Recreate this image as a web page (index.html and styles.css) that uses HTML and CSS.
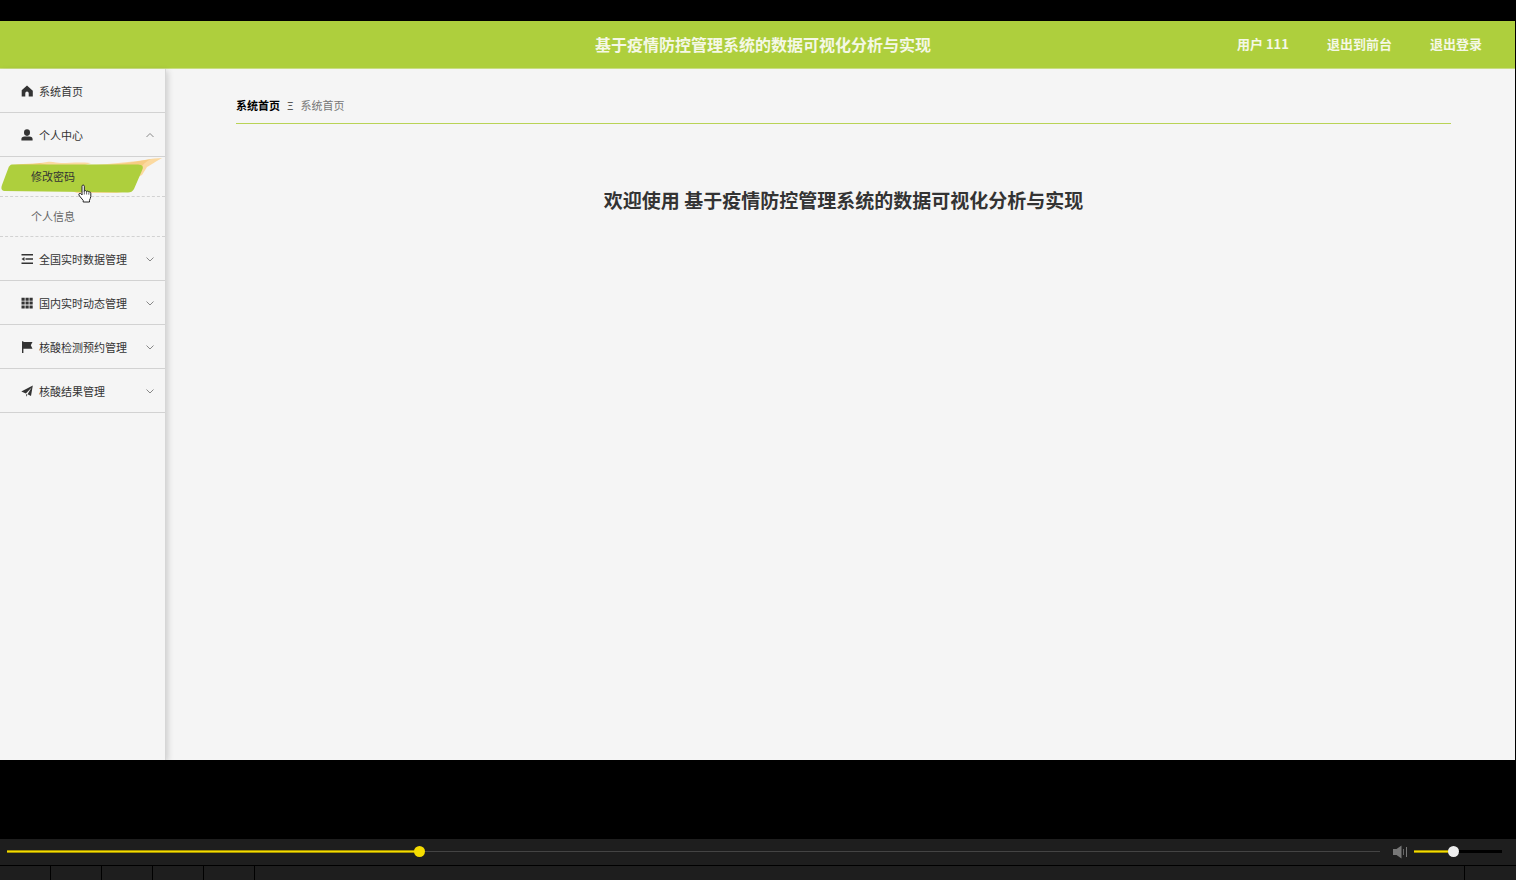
FILE: index.html
```html
<!DOCTYPE html>
<html lang="zh-CN">
<head>
    <meta charset="UTF-8">
    <meta name="viewport" content="width=device-width, initial-scale=1.0">
    <title>基于疫情防控管理系统的数据可视化分析与实现</title>
    <link rel="stylesheet" href="styles.css">
</head>
<body>
    <div class="app">
        <header class="header">
            <h1 class="header-title">基于疫情防控管理系统的数据可视化分析与实现</h1>
            <nav class="header-nav">
                <span>用户 111</span>
                <a href="#front">退出到前台</a>
                <a href="#logout">退出登录</a>
            </nav>
        </header>
        <div class="layout">
            <aside class="sidebar">
                <ul class="menu">
                    <li>
                        <a class="menu-item" href="#home">
                            <svg class="icon" viewBox="0 0 12 12"><path d="M6 .5 11.8 5.7V11.5H7.7V8.2a1.7 1.7 0 0 0-3.4 0v3.3H.7V5.2z"/></svg>
                            <span>系统首页</span>
                        </a>
                    </li>
                    <li>
                        <button class="menu-item" type="button" aria-expanded="true">
                            <svg class="icon" viewBox="0 0 12 12"><ellipse cx="6" cy="3.6" rx="3" ry="3.3"/><path d="M.4 11.6V10Q.4 7.400 3.600 7.400H8.400Q11.600 7.400 11.600 10V11.600Z"/></svg>
                            <span>个人中心</span>
                            <svg class="arrow" viewBox="0 0 8 8"><path d="M.5 6 4 2.500 7.500 6"/></svg>
                        </button>
                        <ul class="submenu">
                            <li>
                                <a class="submenu-item active" href="#password">
                                    <svg class="brush" viewBox="0 0 165 40" preserveAspectRatio="none">
                                        <path d="M8 10C22 5 34 8 47 5c5-1 10 1 14 1 10 0 17-1 30 0l-6 2c16 0 30-2 43-3 14-1 24-4 34-4-7 4-11 7-15 9l-5 8-6 3-7 13-12 2-40 0z" fill="#fbd9a0"/>
                                        <path d="M12 8c10-2 18 0 28-2l8 2h60c14-1 28-3 43-6-8 4-9 8-15 14H12z" fill="#f5c36f" opacity=".6"/>
                                        <path d="M12 7.500H138q7 0 4 6L134 32q-2 3.500-6 3.500L4 34q-4-1-2-6L8 12q1.500-4.500 4-4.500z" fill="#aecf3d"/>
                                    </svg>
                                    <span>修改密码</span>
                                    <svg class="pointer" viewBox="0 0 14 19"><path d="M4 11V2.200C4 .6 6.300.6 6.300 2.200V7.300c.4-1.100 2.200-.8 2.300.4.500-.9 2-.7 2.200.5.800-.7 2-.1 2 1v3.300c0 1.500-1 2.500-1.300 3.800V18H5.200v-1.600L1.500 12C.4 10.700.8 9.300 2 9.300c.8 0 1.400.9 2 1.700z" fill="#fff" stroke="#222" stroke-linejoin="round"/><path d="M6.300 7v3.500M8.600 8v2.500M10.800 8.700v2" fill="none" stroke="#222" stroke-width=".7"/></svg>
                                </a>
                            </li>
                            <li><a class="submenu-item" href="#profile"><span>个人信息</span></a></li>
                        </ul>
                    </li>
                    <li>
                        <button class="menu-item" type="button" aria-expanded="false">
                            <svg class="icon" viewBox="0 0 12 12"><path d="M.5 1h11.500v1.600H.5zM4.500 5.200H12v1.600H4.500zM.5 9.400h11.500V11H.5zM.5 6l3-2v4z"/></svg>
                            <span>全国实时数据管理</span>
                            <svg class="arrow" viewBox="0 0 8 8"><path d="M.5 2.500 4 6 7.500 2.500"/></svg>
                        </button>
                    </li>
                    <li>
                        <button class="menu-item" type="button" aria-expanded="false">
                            <svg class="icon" viewBox="0 0 12 12"><path d="M.5.800h3.200v3H.5zM4.500.800h3.200v3H4.500zM8.500.800h3.200v3H8.500zM.5 4.600h3.200v3H.5zM4.500 4.600h3.200v3H4.500zM8.500 4.600h3.200v3H8.500zM.5 8.400h3.200v3H.5zM4.500 8.400h3.200v3H4.500zM8.500 8.400h3.200v3H8.500z"/></svg>
                            <span>国内实时动态管理</span>
                            <svg class="arrow" viewBox="0 0 8 8"><path d="M.5 2.500 4 6 7.500 2.500"/></svg>
                        </button>
                    </li>
                    <li>
                        <button class="menu-item" type="button" aria-expanded="false">
                            <svg class="icon" viewBox="0 0 12 12"><path d="M1 .2h1.400v11.800H1zM2.400.9H11.500L9.800 4.300l1.700 3.500H2.400z"/></svg>
                            <span>核酸检测预约管理</span>
                            <svg class="arrow" viewBox="0 0 8 8"><path d="M.5 2.500 4 6 7.500 2.500"/></svg>
                        </button>
                    </li>
                    <li>
                        <button class="menu-item" type="button" aria-expanded="false">
                            <svg class="icon" viewBox="0 0 12 12"><path d="M11.800.600 10 11 6.600 9.300 10.600 2.600 4.900 8.500.3 6.500zM5.100 9.100l1.300.7-1.100 1.900z"/></svg>
                            <span>核酸结果管理</span>
                            <svg class="arrow" viewBox="0 0 8 8"><path d="M.5 2.500 4 6 7.500 2.500"/></svg>
                        </button>
                    </li>
                </ul>
            </aside>
            <main class="main">
                <nav class="breadcrumb">
                    <a href="#home">系统首页</a>
                    <span class="separator">Ξ</span>
                    <span>系统首页</span>
                </nav>
                <h2 class="welcome">欢迎使用 基于疫情防控管理系统的数据可视化分析与实现</h2>
            </main>
        </div>
    </div>
    <footer class="player">
        <div class="player-track">
            <input class="range seek" type="range" min="0" max="1000" value="299" aria-label="播放进度">
            <button class="mute" type="button" aria-label="静音">
                <svg viewBox="0 0 16 14"><path d="M1 4h3.500L9.500 .500v13L4.500 10H1z" fill="#777"/><path d="M11.500 4v6" stroke="#666"/><path d="M14.500 2v10" stroke="#777"/></svg>
            </button>
            <input class="range volume" type="range" min="0" max="100" value="44" aria-label="音量">
        </div>
        <div class="player-buttons">
            <span></span>
            <span></span>
            <span></span>
            <span></span>
            <span></span>
            <span class="wide"></span>
            <span></span>
        </div>
    </footer>
</body>
</html>
```
FILE: styles.css
```css
* {
    box-sizing: border-box;
}

body {
    display: flex;
    flex-direction: column;
    min-height: 100vh;
    margin: 0;
    padding-top: 21px;
    background-color: #000;
    color: #333;
    font-family: "Noto Sans CJK SC", sans-serif;
    font-size: 11px;
    line-height: 16px;
}

ul {
    margin: 0;
    padding: 0;
    list-style: none;
}

a {
    color: inherit;
    text-decoration: none;
}

button {
    font: inherit;
    color: inherit;
    background: none;
    border: 0;
    cursor: pointer;
}

.app {
    flex: 1;
    display: flex;
    flex-direction: column;
    margin: 0 1px 79px 0;
    background-color: #f5f5f5;
}

.header {
    display: grid;
    grid-template-columns: 1fr auto 1fr;
    align-items: center;
    height: 48px;
    padding: 0 33px 2px 44px;
    background-color: #aecf3d;
    border-bottom: 1px solid #c9dd83;
    color: #f5f8e6;
}

.header-title {
    grid-column: 2;
    margin: 0;
    font-size: 16px;
    line-height: 24px;
}

.header-nav {
    display: flex;
    justify-content: flex-end;
    gap: 38px;
    font-size: 13px;
    font-weight: bold;
}

.layout {
    flex: 1;
    display: flex;
}

.sidebar {
    width: 166px;
    border-right: 1px solid #d6d6d6;
    box-shadow: 2px 2px 6px rgba(0, 0, 0, 0.16);
}

.menu-item {
    display: flex;
    align-items: center;
    gap: 6px;
    width: 100%;
    height: 44px;
    padding: 0 11px 0 21px;
    border-bottom: 1px solid #d2d2d2;
    text-align: left;
}

.icon {
    width: 12px;
    height: 12px;
    fill: #333;
}

.arrow {
    width: 8px;
    height: 8px;
    margin-left: auto;
    fill: none;
    stroke: #888;
}

.submenu-item {
    position: relative;
    display: flex;
    align-items: center;
    height: 40px;
    padding: 0 0 2px 31px;
    border-bottom: 1px dashed #d2d2d2;
    color: #666;
}

.submenu-item span {
    z-index: 1;
}

.submenu-item.active {
    color: #333;
}

.brush {
    position: absolute;
    top: 0;
    left: 0;
    width: 100%;
    height: 40px;
}

.pointer {
    position: absolute;
    top: 27px;
    left: 78px;
    z-index: 1;
    width: 14px;
    height: 19px;
}

.main {
    flex: 1;
    padding: 28px 64px 0 70px;
}

.breadcrumb {
    display: flex;
    gap: 7px;
    padding-bottom: 10px;
    border-bottom: 1px solid #b9d355;
    color: #777;
}

.breadcrumb a {
    color: #000;
    font-weight: bold;
}

.separator {
    color: #333;
}

.welcome {
    margin: 62px 0 0;
    font-size: 19px;
    line-height: 28px;
    text-align: center;
}

.player {
    background-color: #1e1e1e;
}

.player-track {
    display: flex;
    align-items: center;
    height: 26px;
    padding: 0 14px 1px 7px;
}

.range {
    appearance: none;
    height: 11px;
    margin: 0;
    background-color: transparent;
    background-repeat: no-repeat;
    background-position: left center;
}

.seek {
    flex: 1;
    background-image: linear-gradient(#a39100 1px, #f5dc00 1px 2px, #a39100 2px), linear-gradient(#444, #444);
    background-size: 30% 3px, 100% 1px;
}

.volume {
    width: 88px;
    background-image: linear-gradient(#a39100 1px, #f5dc00 1px 2px, #a39100 2px), linear-gradient(#000, #000);
    background-size: 44% 3px, 100% 3px;
}

.range::-webkit-slider-thumb {
    appearance: none;
    width: 11px;
    height: 11px;
    border-radius: 50%;
    background-color: #f5dc00;
}

.volume::-webkit-slider-thumb {
    background-color: #eee;
}

.mute {
    display: flex;
    margin: 0 6px 0 12px;
    padding: 0;
}

.mute svg {
    width: 16px;
    height: 14px;
}

.player-buttons {
    display: flex;
    gap: 1px;
    height: 15px;
    border-top: 1px solid #000;
    background-color: #000;
}

.player-buttons span {
    width: 50px;
    background-color: #1e1e1e;
}

.player-buttons .wide {
    flex: 1;
}

.player-buttons span:last-child {
    width: 51px;
}
```
